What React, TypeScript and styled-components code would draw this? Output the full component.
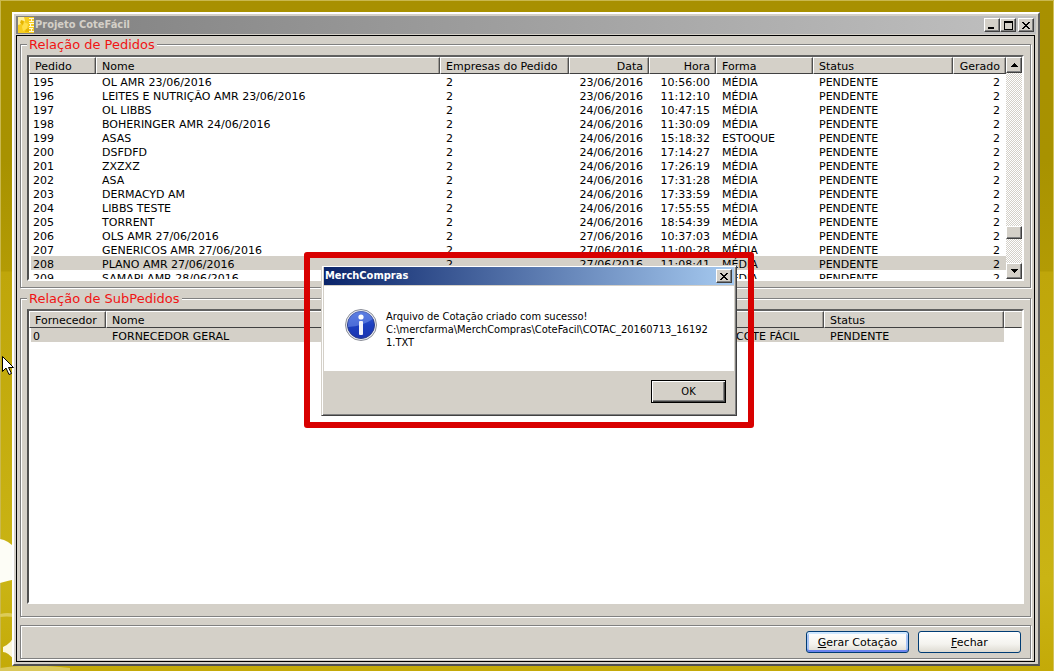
import React from "react";
import styled, { createGlobalStyle, css } from "styled-components";

const FACE = "#d4d0c8";
const VERDANA = `Verdana, "DejaVu Sans", sans-serif`;
const TAHOMA = `Tahoma, "DejaVu Sans Condensed", "DejaVu Sans", sans-serif`;

const GlobalStyle = createGlobalStyle`
  * { box-sizing: border-box; }
  body { margin: 0; background: #c0a80c; color: #000; font: 11px/14px ${VERDANA}; }
  button { font: inherit; color: inherit; padding: 0; margin: 0; }
`;

const raised = css`
  background: ${FACE};
  border: 1px solid;
  border-color: #fff #404040 #404040 #fff;
  box-shadow: inset -1px -1px 0 #808080;
`;

const etched = css`
  border: 1px solid #808080;
  box-shadow: 1px 1px 0 #fff, inset 1px 1px 0 #fff;
`;

const Desktop = styled.div`
  position: relative;
  display: flex;
  min-height: 100vh;
  padding: 12px 14px 5px 12px;
  overflow: hidden;
  background: linear-gradient(#a89000 0, #a89200 160px, #b39b04 271px, #bfa60a 272px, #cab414 580px, #c4aa08 100%);
  box-shadow: inset 1px 1px 0 #c9b84e, inset -1px 0 0 #d2c25a;
`;

const Wallpaper = styled.svg`
  position: absolute;
  left: 0;
  bottom: 0;
`;

const AppWindow = styled.main`
  position: relative;
  flex: 1;
  display: flex;
  flex-direction: column;
  min-width: 0;
  padding: 2px;
  background: ${FACE};
  border: 2px solid;
  border-color: #fff #606060 #505050 #fff;
`;

const TitleBar = styled.header`
  display: flex;
  align-items: center;
  height: 18px;
  margin-bottom: 1px;
  padding: 0 2px;
  background: linear-gradient(90deg, #808080, #c0c0c0);
  color: ${FACE};
  font-family: ${TAHOMA};
`;

const TitleText = styled.h1`
  flex: 1;
  margin: 0 0 0 1px;
  font: bold 11px/16px ${TAHOMA};
`;

const TitleButton = styled.button<{ $apart?: boolean }>`
  ${raised}
  display: grid;
  place-items: center;
  width: 16px;
  height: 14px;
  margin-left: ${(p) => (p.$apart ? 2 : 0)}px;
  color: #000;
`;

const Client = styled.div`
  flex: 1;
  display: flex;
  flex-direction: column;
  margin-right: 1px;
  padding: 8px 3px 2px;
  border: 1px solid #000;
`;

const Group = styled.section<{ $grow?: boolean }>`
  ${etched}
  display: flex;
  flex-direction: column;
  flex: ${(p) => (p.$grow ? "1" : "none")};
  margin-bottom: ${(p) => (p.$grow ? 8 : 10)}px;
  padding: 0 6px ${(p) => (p.$grow ? 12 : 6)}px;
`;

const GroupTitle = styled.h2`
  width: fit-content;
  height: 16px;
  margin: -8px 0 2px;
  padding: 0 2px;
  background: ${FACE};
  color: #f01414;
  font: 13px/16px ${VERDANA};
`;

const ListBox = styled.div<{ $grow?: boolean }>`
  display: flex;
  flex: ${(p) => (p.$grow ? "1" : "none")};
  height: ${(p) => (p.$grow ? "auto" : "226px")};
  overflow: hidden;
  background: #fff;
  border: 2px solid;
  border-color: #606060 #fff #fff #505050;
`;

const ListArea = styled.div`
  flex: 1;
  min-width: 0;
`;

const Grid = styled.table`
  width: 100%;
  table-layout: fixed;
  border-collapse: separate;
  border-spacing: 0;
`;

const HeadCell = styled.th<{ $right?: boolean; $bare?: boolean }>`
  height: 17px;
  padding: 2px 5px 0;
  background: ${FACE};
  border: 1px solid;
  border-color: #fff ${(p) => (p.$bare ? FACE : "#505050")} #404040 #fff;
  box-shadow: inset -1px 0 0 ${(p) => (p.$bare ? FACE : "#a09c96")};
  font-weight: normal;
  line-height: 13px;
  text-align: ${(p) => (p.$right ? "right" : "left")};
  white-space: nowrap;
`;

const Row = styled.tr<{ $selected?: boolean }>`
  td {
    background: ${(p) => (p.$selected ? FACE : "transparent")};
  }
  td.rest {
    background: #fff;
  }
`;

const Cell = styled.td<{ $right?: boolean }>`
  height: 14px;
  padding: 4px 6px 0;
  line-height: 10px;
  text-align: ${(p) => (p.$right ? "right" : "left")};
  white-space: nowrap;
  &:first-child {
    padding-left: 4px;
    box-shadow: inset 2px 0 0 #fff;
  }
`;

const ScrollBar = styled.div`
  display: flex;
  flex-direction: column;
  width: 16px;
  background: repeating-conic-gradient(#fff 0 25%, ${FACE} 0 50%) 0 0 / 2px 2px;
`;

const ScrollButton = styled.button`
  ${raised}
  display: grid;
  place-items: center;
  height: 16px;
`;

const ScrollTrack = styled.div`
  flex: 1;
  display: flex;
  flex-direction: column;
  justify-content: flex-end;
  padding-bottom: 24px;
`;

const ScrollThumb = styled.div`
  ${raised}
  height: 13px;
`;

const Footer = styled.footer`
  ${etched}
  display: flex;
  justify-content: flex-end;
  gap: 9px;
  height: 34px;
  padding: 5px 9px;
`;

const ActionButton = styled.button<{ $focus?: boolean }>`
  width: 103px;
  height: 22px;
  padding-top: 2px;
  border: 1px solid #003c74;
  border-radius: 3px;
  background: linear-gradient(#fff, #f4f3ee 60%, #dedbd2);
  ${(p) =>
    p.$focus &&
    css`
      box-shadow: inset 0 2px 0 #cee7ff, inset 0 -2px 0 #6982ee, inset 2px 0 0 #a8c4f4, inset -2px 0 0 #a8c4f4;
    `}
`;

const Highlight = styled.div`
  position: absolute;
  top: 252px;
  left: calc(50% - 223px);
  width: 450px;
  padding: 7px 11px 6px;
  border: 6px solid #d80000;
  border-radius: 3px;
`;

const Dialog = styled.section`
  ${raised}
  border-color: ${FACE} #404040 #404040 ${FACE};
  box-shadow: inset 1px 1px 0 #fff, inset -1px -1px 0 #808080;
  height: 151px;
  padding: 1px 2px 2px;
  font: 11px/13px ${TAHOMA};
`;

const DialogTitle = styled.header`
  display: flex;
  align-items: center;
  justify-content: space-between;
  height: 18px;
  margin-bottom: 1px;
  padding: 0 2px 0 1px;
  background: linear-gradient(90deg, #0a246a, #a6caf0);
  color: #fff;
  h2 {
    margin: 0;
    font: bold 11px/16px ${TAHOMA};
  }
`;

const Message = styled.div`
  display: flex;
  gap: 9px;
  height: 85px;
  padding: 23px 21px 0;
  background: #fff;
  p {
    margin: 1px 0 0;
  }
`;

const DialogActions = styled.div`
  display: flex;
  justify-content: flex-end;
  padding: 9px 8px;
`;

const OkButton = styled.button`
  ${raised}
  width: 75px;
  height: 23px;
  border-color: #000;
  box-shadow: inset 1px 1px 0 #fff, inset -1px -1px 0 #404040, inset -2px -2px 0 #808080;
`;

const Pointer = styled.svg`
  position: absolute;
  left: 2px;
  top: 356px;
`;

type Order = [number, string, string, string, string];

const orders: Order[] = [
  [195, "OL AMR 23/06/2016", "23/06/2016", "10:56:00", "MÉDIA"],
  [196, "LEITES E NUTRIÇÃO AMR 23/06/2016", "23/06/2016", "11:12:10", "MÉDIA"],
  [197, "OL LIBBS", "24/06/2016", "10:47:15", "MÉDIA"],
  [198, "BOHERINGER AMR 24/06/2016", "24/06/2016", "11:30:09", "MÉDIA"],
  [199, "ASAS", "24/06/2016", "15:18:32", "ESTOQUE"],
  [200, "DSFDFD", "24/06/2016", "17:14:27", "MÉDIA"],
  [201, "ZXZXZ", "24/06/2016", "17:26:19", "MÉDIA"],
  [202, "ASA", "24/06/2016", "17:31:28", "MÉDIA"],
  [203, "DERMACYD AM", "24/06/2016", "17:33:59", "MÉDIA"],
  [204, "LIBBS TESTE", "24/06/2016", "17:55:55", "MÉDIA"],
  [205, "TORRENT", "24/06/2016", "18:54:39", "MÉDIA"],
  [206, "OLS AMR 27/06/2016", "27/06/2016", "10:37:03", "MÉDIA"],
  [207, "GENERICOS AMR 27/06/2016", "27/06/2016", "11:00:28", "MÉDIA"],
  [208, "PLANO AMR 27/06/2016", "27/06/2016", "11:08:41", "MÉDIA"],
  [209, "SAMAPI AMR 28/06/2016", "28/06/2016", "09:12:20", "MÉDIA"],
];

const CloseGlyph = () => (
  <svg width="8" height="7" viewBox="0 0 8 7" shapeRendering="crispEdges" aria-hidden>
    <path d="M0 0h2v1h1v1h2v-1h1v-1h2v1h-1v1h-1v1h-1v1h1v1h1v1h1v1h-2v-1h-1v-1h-2v1h-1v1h-2v-1h1v-1h1v-1h1v-1h-1v-1h-1v-1h-1z" />
  </svg>
);

const AppIcon = () => (
  <svg width="16" height="16" viewBox="0 0 16 16" aria-hidden>
    <rect width="16" height="16" fill="#f6cc1e" />
    <path d="M0 0h6l1 4-4 3-3 1z" fill="#fff0a0" />
    <path d="M6 5l4 2-1 5-4 2-1-4z" fill="#ffdf4a" />
    <path d="M3 3l3 1-1 4-3-2zM8 12l3-1v4H7z" fill="#e6b400" />
    <path d="M11 1.500h5M11 4.500h5M13.500 2v2M11 6.500h5M11 9.500h5M12.500 7v2M11 11.500h4M13.500 11v3M11 14.500h5" stroke="#fff8d4" fill="none" />
  </svg>
);

const InfoIcon = () => (
  <svg width="32" height="32" viewBox="0 0 32 32" role="img" aria-label="Informação">
    <defs>
      <linearGradient id="ball" x1="0" y1="0" x2="0" y2="1">
        <stop offset="0" stopColor="#3a62d8" />
        <stop offset="0.5" stopColor="#1c3fc0" />
        <stop offset="1" stopColor="#1a34b0" />
      </linearGradient>
    </defs>
    <circle cx="16" cy="16" r="15.5" fill="#e8eaf0" stroke="#8c8f98" />
    <circle cx="16" cy="16" r="13.5" fill="url(#ball)" stroke="#2a3c8c" />
    <path d="M3 15a13 13 0 0 1 25-5Q18 17 3 18z" fill="#7d9cf0" opacity="0.5" />
    <circle cx="16" cy="8" r="2.6" fill="#fff" />
    <rect x="14" y="12" width="4" height="14" rx="1" fill="#f4f4fa" />
  </svg>
);

export default function App() {
  return (
    <Desktop>
      <GlobalStyle />
      <Wallpaper width="80" height="140" viewBox="0 0 80 140" aria-hidden>
        <path d="M0 8q8 1 16 10v30Q7 50 0 52z" fill="#fdfdf6" />
        <path d="M0 83q8-2 14 0v3q-8-1-14 0z" fill="#dccb58" />
        <path d="M14 104q-2 8-11 12v5q5 0 11 8z" fill="#fbf6dc" />
        <path d="M0 137q30-5 70 0v3H0z" fill="#dac85a" />
      </Wallpaper>
      <AppWindow>
        <TitleBar>
          <AppIcon />
          <TitleText>Projeto CoteFácil</TitleText>
          <TitleButton aria-label="Minimizar">
            <svg width="8" height="8" shapeRendering="crispEdges" aria-hidden>
              <path d="M0 6h6v2h-6z" />
            </svg>
          </TitleButton>
          <TitleButton aria-label="Maximizar">
            <svg width="9" height="9" shapeRendering="crispEdges" aria-hidden>
              <path fillRule="evenodd" d="M0 0h9v9h-9zM1 2v6h7v-6z" />
            </svg>
          </TitleButton>
          <TitleButton $apart aria-label="Fechar janela">
            <CloseGlyph />
          </TitleButton>
        </TitleBar>
        <Client>
          <Group>
            <GroupTitle>Relação de Pedidos</GroupTitle>
            <ListBox>
              <ListArea>
                <Grid>
                  <colgroup>
                    <col style={{ width: 67 }} />
                    <col />
                    <col style={{ width: 129 }} />
                    <col style={{ width: 80 }} />
                    <col style={{ width: 67 }} />
                    <col style={{ width: 97 }} />
                    <col style={{ width: 140 }} />
                    <col style={{ width: 53 }} />
                  </colgroup>
                  <thead>
                    <tr>
                      <HeadCell>Pedido</HeadCell>
                      <HeadCell>Nome</HeadCell>
                      <HeadCell>Empresas do Pedido</HeadCell>
                      <HeadCell $right>Data</HeadCell>
                      <HeadCell $right>Hora</HeadCell>
                      <HeadCell>Forma</HeadCell>
                      <HeadCell>Status</HeadCell>
                      <HeadCell $right>Gerado</HeadCell>
                    </tr>
                  </thead>
                  <tbody>
                    {orders.map(([id, name, date, time, kind]) => (
                      <Row key={id} $selected={id === 208}>
                        <Cell>{id}</Cell>
                        <Cell>{name}</Cell>
                        <Cell>2</Cell>
                        <Cell $right>{date}</Cell>
                        <Cell $right>{time}</Cell>
                        <Cell>{kind}</Cell>
                        <Cell>PENDENTE</Cell>
                        <Cell $right>2</Cell>
                      </Row>
                    ))}
                  </tbody>
                </Grid>
              </ListArea>
              <ScrollBar>
                <ScrollButton aria-label="Rolar para cima">
                  <svg width="7" height="4" shapeRendering="crispEdges" aria-hidden>
                    <path d="M3 0h1v1h1v1h1v1h1v1h-7v-1h1v-1h1v-1h1z" />
                  </svg>
                </ScrollButton>
                <ScrollTrack>
                  <ScrollThumb />
                </ScrollTrack>
                <ScrollButton aria-label="Rolar para baixo">
                  <svg width="7" height="4" shapeRendering="crispEdges" aria-hidden>
                    <path d="M0 0h7v1h-1v1h-1v1h-1v1h-1v-1h-1v-1h-1v-1h-1z" />
                  </svg>
                </ScrollButton>
              </ScrollBar>
            </ListBox>
          </Group>
          <Group $grow>
            <GroupTitle>Relação de SubPedidos</GroupTitle>
            <ListBox $grow>
              <ListArea>
                <Grid>
                  <colgroup>
                    <col style={{ width: 77 }} />
                    <col />
                    <col style={{ width: 94 }} />
                    <col style={{ width: 180 }} />
                    <col style={{ width: 18 }} />
                  </colgroup>
                  <thead>
                    <tr>
                      <HeadCell>Fornecedor</HeadCell>
                      <HeadCell>Nome</HeadCell>
                      <HeadCell />
                      <HeadCell>Status</HeadCell>
                      <HeadCell $bare />
                    </tr>
                  </thead>
                  <tbody>
                    <Row $selected>
                      <Cell>0</Cell>
                      <Cell>FORNECEDOR GERAL</Cell>
                      <Cell>COTE FÁCIL</Cell>
                      <Cell>PENDENTE</Cell>
                      <Cell className="rest" />
                    </Row>
                  </tbody>
                </Grid>
              </ListArea>
            </ListBox>
          </Group>
          <Footer>
            <ActionButton $focus>
              <u>G</u>erar Cotação
            </ActionButton>
            <ActionButton>
              <u>F</u>echar
            </ActionButton>
          </Footer>
        </Client>
      </AppWindow>
      <Highlight>
        <Dialog role="dialog" aria-labelledby="dialog-title">
          <DialogTitle>
            <h2 id="dialog-title">MerchCompras</h2>
            <TitleButton aria-label="Fechar aviso">
              <CloseGlyph />
            </TitleButton>
          </DialogTitle>
          <Message>
            <InfoIcon />
            <p>
              Arquivo de Cotação criado com sucesso!
              <br />
              C:\mercfarma\MerchCompras\CoteFacil\COTAC_20160713_16192
              <br />
              1.TXT
            </p>
          </Message>
          <DialogActions>
            <OkButton>OK</OkButton>
          </DialogActions>
        </Dialog>
      </Highlight>
      <Pointer width="13" height="20" viewBox="0 0 13 20" aria-hidden>
        <path d="M0.5 0.5v15l3.5-3.5 3 6.500 2.500-1-3-6h5z" fill="#fff" stroke="#000" />
      </Pointer>
    </Desktop>
  );
}
